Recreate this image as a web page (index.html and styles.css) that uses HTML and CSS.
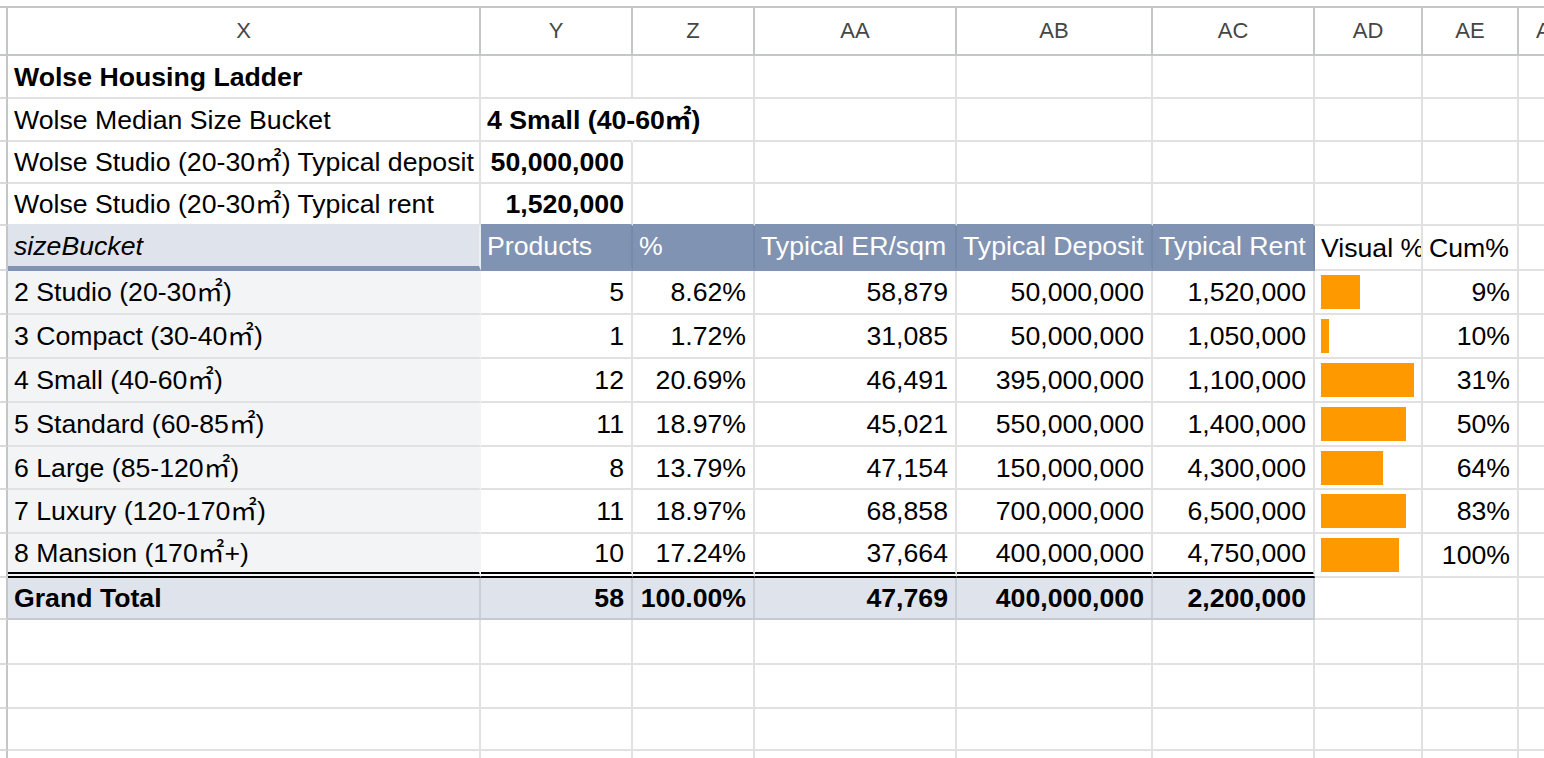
FILE: index.html
```html
<!DOCTYPE html>
<html>
<head>
<meta charset="utf-8">
<title>Wolse Housing Ladder</title>
<link rel="stylesheet" href="styles.css">
</head>
<body>
<div class="sheet">
  <div class="row">
    <div class="c stub hd"></div>
    <div class="c hd">X</div><div class="c hd">Y</div><div class="c hd">Z</div><div class="c hd">AA</div>
    <div class="c hd">AB</div><div class="c hd">AC</div><div class="c hd">AD</div><div class="c hd">AE</div><div class="c hd">AF</div>
  </div>
  <div class="row">
    <div class="c stub"></div>
    <div class="c b">Wolse Housing Ladder</div><div class="c"></div><div class="c"></div><div class="c"></div>
    <div class="c"></div><div class="c"></div><div class="c"></div><div class="c"></div><div class="c"></div>
  </div>
  <div class="row">
    <div class="c stub"></div>
    <div class="c">Wolse Median Size Bucket</div><div class="c b spill">4 Small (40-60㎡)</div><div class="c"></div><div class="c"></div>
    <div class="c"></div><div class="c"></div><div class="c"></div><div class="c"></div><div class="c"></div>
  </div>
  <div class="row">
    <div class="c stub"></div>
    <div class="c">Wolse Studio (20-30㎡) Typical deposit</div><div class="c b r">50,000,000</div><div class="c"></div><div class="c"></div>
    <div class="c"></div><div class="c"></div><div class="c"></div><div class="c"></div><div class="c"></div>
  </div>
  <div class="row">
    <div class="c stub"></div>
    <div class="c above-key">Wolse Studio (20-30㎡) Typical rent</div><div class="c b r above-head">1,520,000</div><div class="c above-head"></div><div class="c above-head"></div>
    <div class="c above-head"></div><div class="c above-head"></div><div class="c"></div><div class="c"></div><div class="c"></div>
  </div>
  <div class="row">
    <div class="c stub"></div>
    <div class="c pk">sizeBucket</div><div class="c ph">Products</div><div class="c ph">%</div><div class="c ph">Typical ER/sqm</div>
    <div class="c ph">Typical Deposit</div><div class="c ph">Typical Rent</div><div class="c clip">Visual %</div><div class="c">Cum%</div><div class="c"></div>
  </div>
  <div class="row">
    <div class="c stub"></div>
    <div class="c pr">2 Studio (20-30㎡)</div><div class="c r">5</div><div class="c r">8.62%</div><div class="c r">58,879</div>
    <div class="c r">50,000,000</div><div class="c r">1,520,000</div><div class="c"><div class="bar" style="width:38.8px"></div></div><div class="c r">9%</div><div class="c"></div>
  </div>
  <div class="row">
    <div class="c stub"></div>
    <div class="c pr">3 Compact (30-40㎡)</div><div class="c r">1</div><div class="c r">1.72%</div><div class="c r">31,085</div>
    <div class="c r">50,000,000</div><div class="c r">1,050,000</div><div class="c"><div class="bar" style="width:7.7px"></div></div><div class="c r">10%</div><div class="c"></div>
  </div>
  <div class="row">
    <div class="c stub"></div>
    <div class="c pr">4 Small (40-60㎡)</div><div class="c r">12</div><div class="c r">20.69%</div><div class="c r">46,491</div>
    <div class="c r">395,000,000</div><div class="c r">1,100,000</div><div class="c"><div class="bar" style="width:93.1px"></div></div><div class="c r">31%</div><div class="c"></div>
  </div>
  <div class="row">
    <div class="c stub"></div>
    <div class="c pr">5 Standard (60-85㎡)</div><div class="c r">11</div><div class="c r">18.97%</div><div class="c r">45,021</div>
    <div class="c r">550,000,000</div><div class="c r">1,400,000</div><div class="c"><div class="bar" style="width:85.4px"></div></div><div class="c r">50%</div><div class="c"></div>
  </div>
  <div class="row">
    <div class="c stub"></div>
    <div class="c pr">6 Large (85-120㎡)</div><div class="c r">8</div><div class="c r">13.79%</div><div class="c r">47,154</div>
    <div class="c r">150,000,000</div><div class="c r">4,300,000</div><div class="c"><div class="bar" style="width:62.1px"></div></div><div class="c r">64%</div><div class="c"></div>
  </div>
  <div class="row">
    <div class="c stub"></div>
    <div class="c pr">7 Luxury (120-170㎡)</div><div class="c r">11</div><div class="c r">18.97%</div><div class="c r">68,858</div>
    <div class="c r">700,000,000</div><div class="c r">6,500,000</div><div class="c"><div class="bar" style="width:85.4px"></div></div><div class="c r">83%</div><div class="c"></div>
  </div>
  <div class="row">
    <div class="c stub"></div>
    <div class="c pr last">8 Mansion (170㎡+)</div><div class="c r last">10</div><div class="c r last">17.24%</div><div class="c r last">37,664</div>
    <div class="c r last">400,000,000</div><div class="c r last">4,750,000</div><div class="c"><div class="bar" style="width:77.6px"></div></div><div class="c r">100%</div><div class="c"></div>
  </div>
  <div class="row">
    <div class="c stub"></div>
    <div class="c gt">Grand Total</div><div class="c gt r">58</div><div class="c gt r">100.00%</div><div class="c gt r">47,769</div>
    <div class="c gt r">400,000,000</div><div class="c gt r">2,200,000</div><div class="c"></div><div class="c"></div><div class="c"></div>
  </div>
  <div class="row">
    <div class="c stub"></div>
    <div class="c"></div><div class="c"></div><div class="c"></div><div class="c"></div>
    <div class="c"></div><div class="c"></div><div class="c"></div><div class="c"></div><div class="c"></div>
  </div>
  <div class="row">
    <div class="c stub"></div>
    <div class="c"></div><div class="c"></div><div class="c"></div><div class="c"></div>
    <div class="c"></div><div class="c"></div><div class="c"></div><div class="c"></div><div class="c"></div>
  </div>
  <div class="row">
    <div class="c stub"></div>
    <div class="c"></div><div class="c"></div><div class="c"></div><div class="c"></div>
    <div class="c"></div><div class="c"></div><div class="c"></div><div class="c"></div><div class="c"></div>
  </div>
  <div class="row">
    <div class="c stub"></div>
    <div class="c"></div><div class="c"></div><div class="c"></div><div class="c"></div>
    <div class="c"></div><div class="c"></div><div class="c"></div><div class="c"></div><div class="c"></div>
  </div>
</div>
</body>
</html>
```
FILE: styles.css
```css
html, body {
  margin: 0;
  padding: 0;
  background: #ffffff;
  overflow: hidden;
}

.sheet {
  display: grid;
  grid-template-columns: 8px 473px 152px 122px 202px 196px 162px 108px 96px 64px;
  grid-template-rows: 50px 43px 43px 42px 42px 45px 44px 44px 44px 44px 43px 44px 44px 42px 45px 44px 42px 44px;
  margin-top: 6px;
  font-family: "Liberation Sans", Arial, "Noto Sans CJK KR", sans-serif;
  font-size: 26.67px;
  line-height: 30px;
  color: #000000;
}

.row {
  display: contents;
}

.c {
  box-sizing: border-box;
  display: flex;
  align-items: center;
  min-width: 0;
  white-space: nowrap;
  padding: 0 7px 0 6px;
  border-right: 2px solid #e1e1e1;
  border-bottom: 2px solid #e1e1e1;
}

.stub {
  padding: 0;
  border-right-color: #c4c7c5;
  border-bottom-color: #dadada;
}

.hd {
  border-top: 2px solid #c4c7c5;
  border-right-color: #c4c7c5;
  border-bottom-color: #c4c7c5;
  justify-content: center;
  padding: 0;
  font-size: 22px;
  color: #444746;
}

.b {
  font-weight: bold;
}

.r {
  justify-content: flex-end;
}

.spill {
  border-right-color: transparent;
}

.clip {
  overflow: hidden;
}

.above-key {
  border-bottom-color: #dfe3eb;
}

.above-head {
  border-bottom-color: #8093b2;
}

.pk {
  background: #dfe3eb;
  font-style: italic;
  border-right-color: #eceef2;
  border-bottom: 5px solid #8093b2;
}

.ph {
  background: #8093b2;
  color: #ffffff;
  border-right-color: #7789a8;
  border-bottom: 5px solid #8093b2;
}

.pr {
  background: #f3f4f6;
  border-right-color: #f3f4f6;
}

.last {
  border-bottom: 6px double #000000;
}

.gt {
  background: #dfe3eb;
  font-weight: bold;
  border-right-color: #c9cdd6;
  border-bottom-color: #c5c9d2;
}

.bar {
  height: 34px;
  background: #ff9900;
  flex: none;
}
```
